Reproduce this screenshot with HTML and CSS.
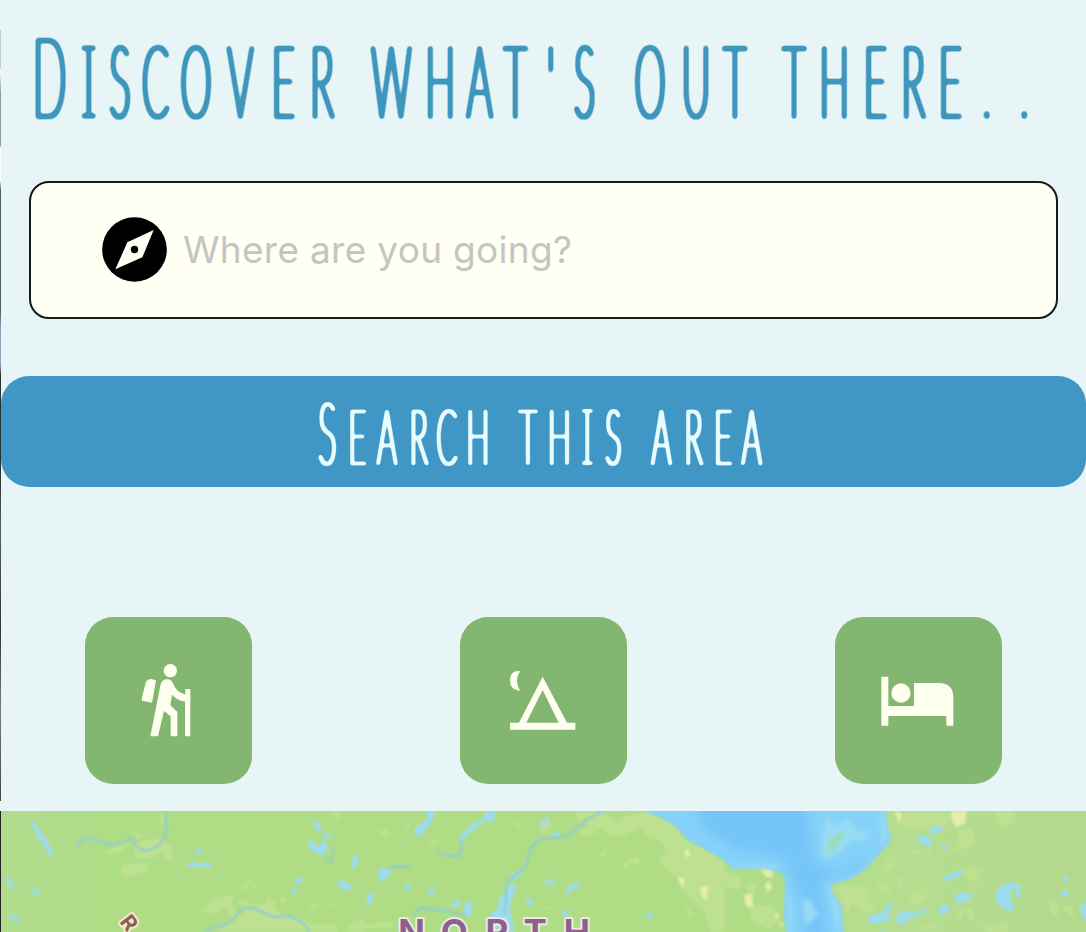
FILE: index.html
```
<!DOCTYPE html>
<html lang="en">
<head>
<meta charset="utf-8">
<title>Discover</title>
<link rel="stylesheet" href="styles.css">
</head>
<body>
<div class="edge"></div>
<main class="screen">
  <h1 class="title">
    <svg class="lettering" viewBox="0 0 1086 182" width="1086" height="182">
      <defs>
        <filter id="marker" filterUnits="userSpaceOnUse" x="0" y="0" width="1086" height="182" color-interpolation-filters="sRGB">
          <feMorphology operator="dilate" radius="1 0"/>
          <feGaussianBlur stdDeviation="1.4"/>
          <feComponentTransfer><feFuncA type="linear" slope="2.8" intercept="-.4"/></feComponentTransfer>
        </filter>
        <filter id="marker-fine" filterUnits="userSpaceOnUse" x="0" y="0" width="1086" height="182" color-interpolation-filters="sRGB">
          <feMorphology operator="dilate" radius="1 0"/>
          <feGaussianBlur stdDeviation="1.3"/>
          <feComponentTransfer><feFuncA type="linear" slope="3" intercept="-.6"/></feComponentTransfer>
        </filter>
      </defs>
      <g filter="url(#marker)">
        <text class="hand hand-title" transform="scale(.4 1)" y="117.500" x="124 222 300 389 490 601 708 805 889 978 1101 1199 1288 1377 1461 1549 1625 1740 1837 1900 1985 2086 2188 2283 2376 2467 2561"><tspan class="initial">D</tspan><tspan class="slab">I</tspan>SCOVER WHAT'S OUT THERE<tspan class="dots">..</tspan></text>
      </g>
    </svg>
  </h1>
  <label class="search">
    <svg class="compass" viewBox="0 0 195 195" width="65" height="65">
      <circle cx="97.500" cy="97.500" r="97"/>
      <path class="needle" d="M155 39L121 121L40 157L76 76Z"/>
      <circle cx="97.500" cy="97.500" r="11"/>
    </svg>
    <input class="place" type="text" placeholder="Where are you going?">
  </label>
  <button class="go" type="button">
    <svg class="lettering" viewBox="0 0 1084 111" width="1084" height="111">
      <g filter="url(#marker-fine)">
        <text class="hand hand-button" transform="scale(.4 1)" y="88" x="816 891 965 1044 1115 1192 1250 1317 1396 1466 1531 1600 1651 1731 1805 1877"><tspan class="initial">S</tspan>EARCH TH<tspan class="slab">I</tspan>S AREA</text>
      </g>
    </svg>
  </button>
  <nav class="filters">
    <button class="filter" type="button">
      <svg viewBox="0 0 501 501" width="167" height="167">
        <circle cx="256" cy="161" r="20"/>
        <path d="M199 186L213 190L201 257L171 251Q169 249 171 241L182 198Q186 186 199 186Z"/>
        <path d="M227 202Q233 185 249 187Q260 188 266 203Q274 224 298 231L301 234V216H316V358H300V253Q275 250 261 233L256 265L277 284V358H257V298L237 282L219 358H196Z"/>
      </svg>
    </button>
    <button class="filter" type="button">
      <svg viewBox="0 0 501 501" width="167" height="167">
        <path d="M180 162Q150 160 150 190Q150 220 180 221Q162 190 180 162Z"/>
        <path fill-rule="evenodd" d="M248 179L321 317H346V338H150V317H177ZM248 219L199 317H296Z"/>
      </svg>
    </button>
    <button class="filter" type="button">
      <svg viewBox="0 0 501 501" width="167" height="167">
        <circle cx="198" cy="228" r="29"/>
        <path d="M139 179H160V267H237V198H311Q355 198 355 242V326H334V297H160V326H139Z"/>
      </svg>
    </button>
  </nav>
  <section class="map">
    <svg viewBox="0 811 1086 121" width="1086" height="121">
      <defs>
        <linearGradient id="land" x1="0" x2="1" y1="0" y2="0">
          <stop offset="0" stop-color="#b1dc8e"/><stop offset=".1" stop-color="#afdd85"/><stop offset=".68" stop-color="#afdc85"/><stop offset=".82" stop-color="#b5dd8f"/><stop offset="1" stop-color="#b3da8c"/>
        </linearGradient>
        <filter id="soft"><feGaussianBlur stdDeviation="2.4"/></filter>
        <filter id="shoal"><feGaussianBlur stdDeviation="7"/></filter>
        <filter id="depth" x="-30%" y="-30%" width="160%" height="160%"><feGaussianBlur stdDeviation="16"/></filter>
      </defs>
      <rect x="0" y="811" width="1086" height="121" fill="url(#land)"/>
      <g transform="translate(0 790) scale(.33333)" filter="url(#soft)">
        <g class="meadow">
          <path d="M315 185L345 166L385 165L360 185L322 193ZM392 117L425 142L416 148L394 129ZM395 170L420 152L470 145L492 150L512 175L517 216L490 208L480 180L458 205L405 208ZM358 240L370 222L442 221L435 244L370 264ZM474 78L485 72L490 104H480Z"/>
          <path d="M715 303L732 280L748 270L770 294L765 298L747 280L725 302ZM595 362L632 330L665 316L700 322L692 342L710 370L690 385L672 352L645 370ZM705 335L730 330L765 348L790 340L802 322L820 332L824 360L860 372L910 390L935 405L1010 405L1012 426H640L700 395L735 358ZM835 325L855 322L848 340ZM925 345L950 340L935 365ZM970 350L990 338L1000 352L988 347ZM1045 400L1086 385V426H1040ZM985 68H1025L1013 90L1000 76Z"/>
        </g>
        <g class="lake">
          <path d="M86 92L98 95L147 164L160 207L143 190L112 145ZM12 260L24 262L47 304L24 288ZM92 295L112 300L119 319L95 308ZM18 372L44 375L65 397L38 390ZM582 175L602 178L600 190L585 192ZM555 220L585 217L595 223L625 215L634 233L600 232L560 230Z"/>
          <path d="M937 90L950 95L963 120L952 126L938 105ZM963 128L996 137L980 147L962 137ZM920 158L930 150L950 172L965 153L980 155L976 185L958 197L942 186L925 180ZM1058 196L1073 195L1067 235L1050 232ZM874 273L900 260L910 264L896 284ZM868 301L882 295L887 307L872 313ZM1008 276L1022 270L1055 290L1052 302L1012 291Z"/>
        </g>
        <path class="river" d="M493 60L497 120Q490 155 470 168T430 183Q410 176 402 158T380 150T340 162T280 148T225 173M612 424L645 410Q685 410 713 366Q735 345 765 358T810 378T850 375Q910 390 925 426"/>
        <path class="stream" d="M975 195L989 220L1000 168"/>
      </g>
      <g transform="translate(362 790) scale(.33333)" filter="url(#soft)">
        <g class="meadow">
          <path d="M45 125L70 117L84 130L65 145ZM195 153L222 152L221 164L205 168ZM445 90L475 105L465 118ZM125 105L138 98L142 120ZM535 90L560 84L568 110L552 130L530 122ZM0 405L70 395L100 408L80 415H0ZM540 350L570 345L555 360Z"/>
          <path d="M635 70L700 60L735 74L760 100L780 78L820 75L855 60L925 100L975 155L1030 180L1086 212V426H1045L1025 370L985 330L958 300L950 270L905 235L888 205L910 180L885 145L850 140L840 110L775 142L735 135L720 112L672 145L645 125L680 105L650 92ZM705 190L740 175L720 203ZM778 225L800 200L830 205L828 228L805 215L790 239ZM820 306L845 280L830 306ZM962 340L995 375L978 390Z"/>
        </g>
        <path class="sand" d="M963 190L975 175L982 196L970 203ZM942 264L966 262L959 295ZM1010 293L1037 285L1030 330L1017 322Z"/>
        <g class="lake">
          <path d="M190 56H212L214 82L195 110L170 138L153 134L158 106L170 108L193 84ZM45 237L62 233L88 247L62 275L48 268ZM12 318L25 307L32 315L23 349L12 345ZM125 284L137 280L146 297L130 306ZM193 303L210 291L216 308L202 317ZM260 350L282 327L296 335L278 354ZM304 337L328 338L320 383L304 374Z"/>
          <path d="M287 144L330 100L355 90L375 60H397L392 92L360 95L315 132L295 160ZM438 260L465 240L478 248L452 274ZM440 285L464 285L452 310L440 355L455 426H400L375 380L408 352L410 320L427 312ZM545 277L575 265L574 280L550 289ZM607 315L615 289L638 277L655 288L625 300L617 315ZM485 332L500 325L513 336L499 348ZM595 365L609 358L618 380L600 377ZM850 376L857 366L874 380L858 390ZM528 115L552 70L548 108Z"/>
        </g>
        <path class="river" d="M725 62Q680 80 660 98T625 130T560 142Q520 148 508 168T490 225L432 280L425 375M220 187Q280 208 294 192V150M75 238L90 230H140M155 375Q160 352 185 355T265 365L310 377"/>
        <path class="lake" d="M570 128L587 126L590 138H572Z"/>
      </g>
      <g transform="translate(724 790) scale(.33333)">
        <g filter="url(#soft)">
          <path class="sea" d="M-285 50H480L484 105L500 145L480 175L460 195L425 235L370 269L320 281L318 306L348 345L358 440H187L176 380L181 265L160 243L105 235L25 238L-8 208L-60 178L-115 148L-145 112L-190 85L-235 65Z"/>
          <path class="meadow" d="M505 70H680L670 105L650 110L620 105L590 120L550 115L520 95ZM700 120L740 115L750 160L735 170L690 185L665 185L705 165ZM805 60H870L860 100L830 118ZM535 180L590 178L630 205L615 180L575 190ZM475 220L500 195L520 215L500 235L480 260ZM325 290L380 285L440 295L430 320L450 360L415 370L380 340L365 380L350 335ZM450 285L480 275L500 320L475 315ZM505 262L530 265L535 295L515 290ZM550 335L585 265L560 310L615 290L598 330L560 345ZM715 255L740 215L745 235L785 230L750 250L765 280L730 268ZM565 415L640 395L615 420ZM690 370L745 345L740 400L720 360L705 390ZM970 335L995 330L1000 380L975 365ZM1010 355L1040 345L1050 390L1025 365ZM760 410L850 400V426H790Z"/>
          <path class="meadow" d="M0 240L50 260L45 300L0 290ZM55 290L100 275L85 315ZM65 345L145 350L170 385L130 420L80 390Z"/>
          <path class="sand" d="M678 65L725 60L720 100L695 112L680 90ZM508 60L530 70L522 100ZM107 240L140 240L145 262L122 260ZM120 287L130 272L142 292L130 308ZM58 315L80 310L84 350L62 348ZM147 381L155 367L164 383ZM161 405L170 397L177 407Z"/>
          <path class="lake" d="M573 145L590 135L618 145L621 170L595 165ZM610 125L635 105L660 115L625 135ZM650 165L663 165L665 182L652 180ZM650 260L715 240L708 258L665 272ZM690 315L710 308L735 310L740 328L695 342ZM638 357L660 342L678 358L655 375L640 370ZM427 378L475 368L482 350L508 338L490 370L495 388L450 402L430 395ZM515 378L540 360L565 370L605 353L600 368L545 390L535 405L515 400ZM808 315L825 290L850 277L885 285L887 325L873 322L872 295L855 303L862 345L875 355L850 363L820 345ZM1013 260L1027 258L1030 275L1017 277ZM1007 308L1022 298L1034 315L1008 320ZM1065 348L1086 335V400L1070 375ZM465 420L475 415L482 426Z"/>
        </g>
        <path class="deep" filter="url(#depth)" d="M-120 0H240L265 220L350 245L430 175L390 240L290 270L310 480L240 480L225 320L175 200L40 180L-60 120Z"/>
        <g filter="url(#shoal)">
          <path class="shallow" d="M8 208L30 225L115 222L165 232L155 240L105 232L28 234ZM300 90L320 80L325 115L370 85L395 120L440 130L425 150L375 155L350 185L310 210L285 190ZM465 66H480L485 150L470 170ZM310 285L320 285L318 310L345 350V440H340L320 350ZM232 325L255 330L280 375L240 410ZM190 300L200 330V440H190Z"/>
        </g>
        <path class="shoal" filter="url(#soft)" d="M302 177L315 145L338 133L343 120L357 125L355 148L335 165L330 182L310 188Z"/>
      </g>
      <text class="road" transform="translate(118 922) rotate(52)">R</text>
      <text class="region" y="944.500" x="410.500 453.200 496 534.200 575.800">NORTH</text>
    </svg>
  </section>
</main>
</body>
</html>
```
FILE: styles.css
```
* { box-sizing: border-box; }
body { margin: 0; background: #e7f5f7; font-family: Inter, "Liberation Sans", sans-serif; }
button { border: 0; padding: 0; }
svg { display: block; }
.screen { width: 1086px; height: 932px; display: flex; flex-direction: column; overflow: hidden; }
.edge { position: absolute; left: 0; top: 30px; width: 1px; height: 771px;
  background: linear-gradient(#c5ccd1 0 38px, #fff 40px, #8b95a4 65px 115px, #fff 118px 150px, #52616f 160px 280px, #8fa0b5 300px 335px, #24332f 345px 440px, #55605a 500px, #333 600px, #777b86 680px, #444 771px); }
.title { margin: 0; height: 182px; flex: none; font-weight: normal; }
.hand { font-family: Lato, sans-serif; font-weight: 100; text-anchor: middle; stroke-linejoin: round; stroke-linecap: round; }
.slab { font-family: Inter, sans-serif; font-feature-settings: "cv08" 1, "ss02" 1; }
.hand-title { font-size: 99px; fill: #3f96bd; stroke: #3f96bd; stroke-width: 3.2px; }
.hand-title .initial { font-size: 111px; }
.hand-title .slab { font-size: 96px; stroke-width: 2px; }
.hand-title .dots { font-size: 60px; }
.hand-button { font-size: 76px; fill: #e6fcff; stroke: #e6fcff; stroke-width: 2.2px; }
.hand-button .initial { font-size: 86px; }
.hand-button .slab { font-size: 74px; stroke-width: 1.2px; }
.search { height: 138px; flex: none; margin: -1px 28px 0 29px; border: 2px solid #16191a; border-radius: 20px; background: #fffff3; display: flex; align-items: center; gap: 16px; padding: 0 30px 2px 71px; }
.compass { flex: none; fill: #000; }
.compass .needle { fill: #fffff3; }
.place { flex: 1; min-width: 0; border: 0; padding: 0; outline: 0; background: none; font-family: Inter, sans-serif; font-size: 37px; letter-spacing: .3px; height: 60px; }
.place::placeholder { color: #c5c5c0; opacity: 1; }
.go { margin: 57px 0 0 1px; width: 1085px; height: 111px; flex: none; border-radius: 28px; background: #4096c4; overflow: hidden; }
.filters { margin-top: 130px; padding: 0 84px 0 85px; display: flex; justify-content: space-between; height: 167px; flex: none; }
.filter { width: 167px; height: 167px; border-radius: 28px; background: #82b671; fill: #fffff0; }
.map { margin-top: 27px; height: 121px; flex: none; border-left: 1px solid #222; overflow: hidden; }
.meadow { fill: #bde190; }
.lake { fill: #9bdcf1; }
.sand { fill: #e6eda9; }
.sea { fill: #86d1f9; }
.shallow { fill: #97dcf5; }
.deep { fill: #76c5f8; }
.shoal { fill: #9bdcc0; }
.river, .stream { fill: none; stroke: #91cfc8; stroke-width: 8; stroke-linejoin: round; }
.stream { stroke-width: 5; }
.region, .road { font-family: Inter, sans-serif; paint-order: stroke; stroke-linejoin: round; }
.region { font-size: 35px; font-weight: 700; text-anchor: middle; fill: #8b628f; stroke: #ecebdd; stroke-width: 4px; }
.road { font-size: 21px; font-weight: 700; fill: #8a6255; stroke: #f3eacb; stroke-width: 4px; }
```
